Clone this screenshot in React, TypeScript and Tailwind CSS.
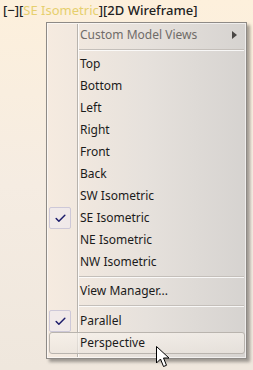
import { Check } from "lucide-react";

const views = ["Top", "Bottom", "Left", "Right", "Front", "Back", "SW Isometric", "SE Isometric", "NE Isometric", "NW Isometric"];

function CheckBox() {
  return (
    <div className="absolute left-[2px] top-0 flex h-[22px] w-[22px] items-center justify-center rounded-[2px] border border-[#cdc8d8] bg-[#efeaf0]/60">
      <Check className="h-[13px] w-[13px] text-[#1c1c6b]" strokeWidth={2.75} />
    </div>
  );
}

function Item({ label, checked, hot, disabled, sub }: { label: string; checked?: boolean; hot?: boolean; disabled?: boolean; sub?: boolean }) {
  return (
    <div className="relative h-[22px]">
      {hot && <div className="absolute inset-y-0 left-[2px] right-[1px] rounded-[3px] border border-[#b9b4ae] bg-gradient-to-b from-[#f7f2ec]/70 to-[#ebe5de]/70" />}
      {checked && <CheckBox />}
      <div className={`relative flex h-full items-center pl-[33px] ${disabled ? "text-[#6f6c69]" : "text-[#1b1b1b]"}`}>{label}</div>
      {sub && (
        <svg className="absolute right-[9px] top-[7px]" width="5" height="8" viewBox="0 0 5 8">
          <path d="M0 0 L5 4 L0 8 Z" fill="#4a4745" />
        </svg>
      )}
    </div>
  );
}

function Sep({ h }: { h: string }) {
  return (
    <div className={`flex ${h} items-center pl-[32px] pr-[2px]`}>
      <div className="w-full border-t border-[#c4bfba] border-b border-b-white/80" />
    </div>
  );
}

export default function App() {
  return (
    <div className="relative h-[370px] w-[253px] overflow-hidden bg-gradient-to-b from-[#fdf0dc] via-[#f5ece2] to-[#efe7dd] text-[12px]" style={{ fontFamily: '"Noto Sans", sans-serif' }}>
      <div className="pl-[3px] pt-[2px] text-[13px] font-medium leading-[17px] text-[#222]">
        [−][<span className="font-normal text-[#e6cf6e]">SE Isometric</span>][2D Wireframe]
      </div>
      <div className="absolute left-[46px] top-[22px] h-[337px] w-[201px] border border-[#8e8a86] bg-gradient-to-r from-[#f6ebe0] via-[#e6e1dc] to-[#d6d3d0] shadow-[3px_3px_3px_rgba(0,0,0,0.35)]">
        <div className="absolute inset-0 border border-white/60" />
        <div className="absolute bottom-[1px] left-[30px] top-[1px] w-[2px] border-l border-[#b8b3ad] border-r border-r-white/80" />
        <div className="relative pt-[1px]">
          <Item label="Custom Model Views" disabled sub />
          <Sep h="h-[7px]" />
          {views.map((v) => (
            <Item key={v} label={v} checked={v === "SE Isometric"} />
          ))}
          <Sep h="h-[7px]" />
          <Item label="View Manager..." />
          <Sep h="h-[8px]" />
          <Item label="Parallel" checked />
          <Item label="Perspective" hot />
        </div>
      </div>
      <svg className="absolute left-[156px] top-[346px]" width="14" height="22" viewBox="0 0 14 22">
        <path d="M0.5 0.5 L0.5 17 L4.5 13 L7.5 20.5 L10.5 19.3 L7.5 12 L13 12 Z" fill="#fff" stroke="#000" strokeWidth="1" strokeLinejoin="round" />
      </svg>
    </div>
  );
}
